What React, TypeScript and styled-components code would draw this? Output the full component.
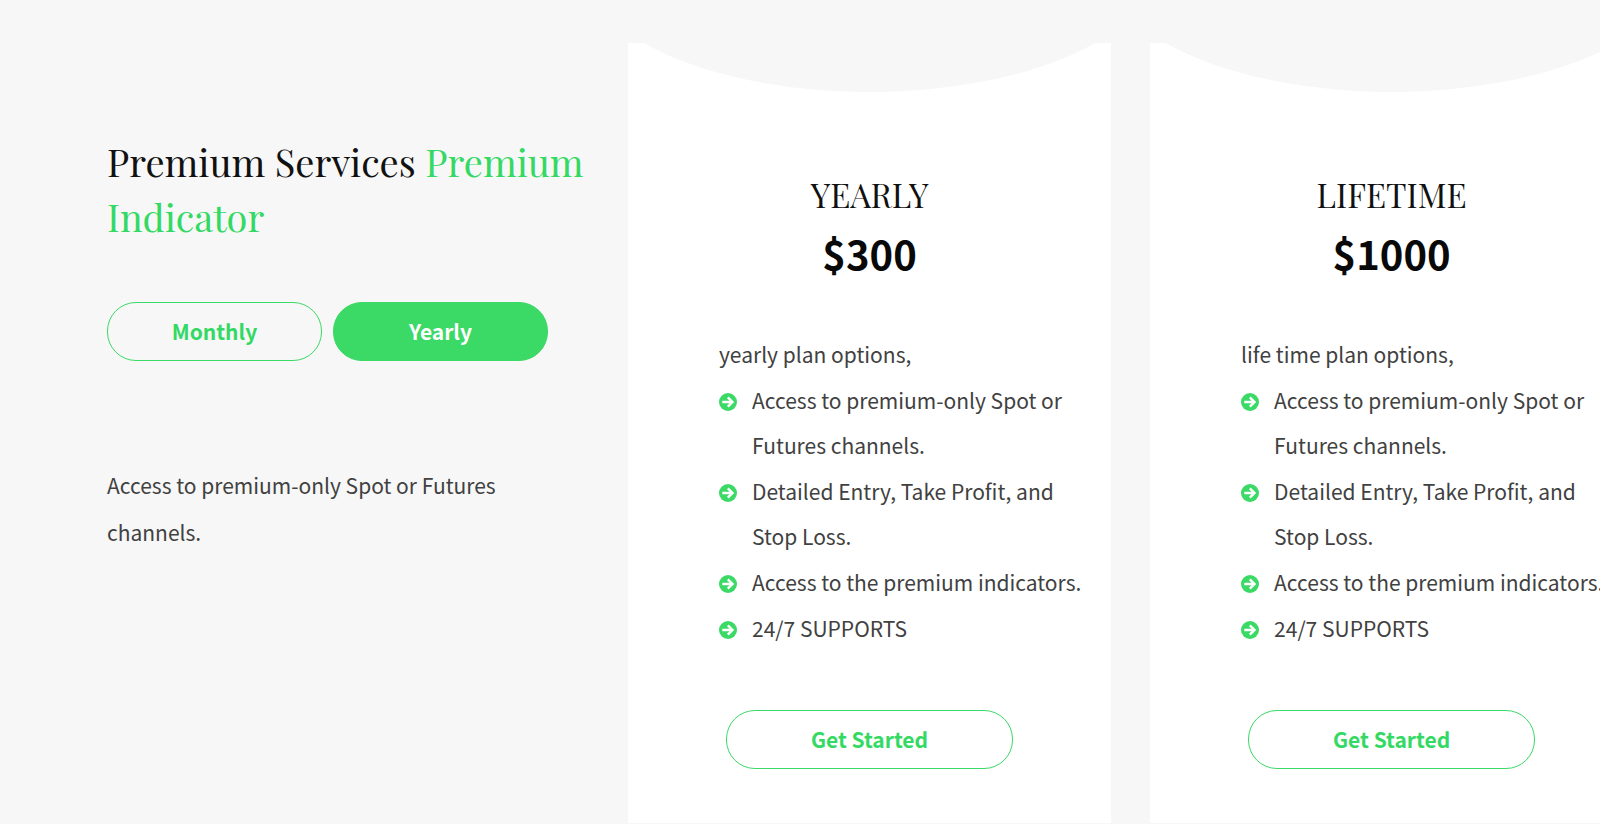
import React, { useState } from "react";
import styled, { createGlobalStyle } from "styled-components";

const colors = {
  page: "#f7f7f7",
  card: "#ffffff",
  green: "#3bd966",
  greenText: "#34d964",
  heading: "#111111",
  price: "#090909",
  body: "#414141",
};

const serif = `"Playfair Display", "Liberation Serif", serif`;
const sans = `"Noto Sans CJK SC", sans-serif`;

const GlobalStyle = createGlobalStyle`
  *, *::before, *::after { box-sizing: border-box; }
  body {
    margin: 0;
    background: ${colors.page};
    color: ${colors.body};
    font-family: ${sans};
    font-size: 21px;
  }
  h1, h2, p, ul { margin: 0; padding: 0; font-weight: 400; }
`;

const Section = styled.main`
  display: flex;
  padding-top: 43px;
  padding-bottom: 1px;
  overflow: hidden;
`;

const Intro = styled.section`
  flex: 0 0 39.25%;
  padding: 91px 40px 0 107px;
`;

const Heading = styled.h1`
  color: ${colors.heading};
  font-family: ${serif};
  font-size: 38px;
  line-height: 55px;
`;

const Accent = styled.span`
  color: ${colors.greenText};
`;

const Toggle = styled.div`
  display: flex;
  gap: 11px;
  margin-top: 58px;
`;

const PillButton = styled.button<{ $filled?: boolean; $width: number }>`
  width: ${(p) => p.$width}px;
  height: 59px;
  padding: 0 0 2px;
  border: 1px solid ${colors.green};
  border-radius: 29px;
  background: ${(p) => (p.$filled ? colors.green : "transparent")};
  color: ${(p) => (p.$filled ? "#ffffff" : colors.greenText)};
  font-family: ${sans};
  font-size: 21px;
  font-weight: 700;
  line-height: 32px;
  cursor: pointer;
`;

const Summary = styled.p`
  max-width: 440px;
  margin-top: 101px;
  line-height: 47px;
`;

const Plans = styled.section`
  display: flex;
  flex: 1;
  gap: 39px;
  min-width: 0;
`;

const Card = styled.article`
  position: relative;
  display: flex;
  flex: 0 0 49.7%;
  flex-direction: column;
  align-items: center;
  padding: 126px 24px 54px;
  overflow: hidden;
  background: ${colors.card};

  &::before {
    content: "";
    position: absolute;
    top: -213px;
    left: -10%;
    width: 120%;
    height: 262px;
    border-radius: 50%;
    background: ${colors.page};
  }
`;

const PlanName = styled.h2`
  color: ${colors.heading};
  font-family: ${serif};
  font-size: 33px;
  line-height: 50px;
`;

const Price = styled.p`
  color: ${colors.price};
  font-size: 40px;
  font-weight: 700;
  line-height: 68px;
`;

const Options = styled.div`
  display: flex;
  flex-direction: column;
  align-self: stretch;
  gap: 1px;
  margin: 45px 0 59px;
  padding-left: 67px;
  line-height: 45px;
`;

const Features = styled.ul`
  display: flex;
  flex-direction: column;
  gap: 1px;
  list-style: none;
`;

const Feature = styled.li`
  display: flex;
  gap: 15px;
`;

const BulletIcon = styled.svg`
  flex: none;
  width: 18px;
  height: 18px;
  margin-top: 15px;
`;

function Bullet() {
  return (
    <BulletIcon viewBox="0 0 18 18" aria-hidden="true">
      <circle cx="9" cy="9" r="9" fill={colors.green} />
      <path
        d="M3.3 9H13.4M8.8 4.3L13.5 9L8.8 13.7"
        fill="none"
        stroke="#ffffff"
        strokeWidth="2.4"
      />
    </BulletIcon>
  );
}

const features = [
  "Access to premium-only Spot or Futures channels.",
  "Detailed Entry, Take Profit, and Stop Loss.",
  "Access to the premium indicators.",
  "24/7 SUPPORTS",
];

const plans = [
  { name: "YEARLY", price: "$300", lead: "yearly plan options," },
  { name: "LIFETIME", price: "$1000", lead: "life time plan options," },
];

type Period = "Monthly" | "Yearly";
const periods: Period[] = ["Monthly", "Yearly"];

export default function App() {
  const [period, setPeriod] = useState<Period>("Yearly");

  return (
    <>
      <GlobalStyle />
      <Section>
        <Intro>
          <Heading>
            Premium Services <Accent>Premium Indicator</Accent>
          </Heading>
          <Toggle>
            {periods.map((p) => (
              <PillButton
                key={p}
                type="button"
                $width={215}
                $filled={p === period}
                aria-pressed={p === period}
                onClick={() => setPeriod(p)}
              >
                {p}
              </PillButton>
            ))}
          </Toggle>
          <Summary>{features[0]}</Summary>
        </Intro>
        <Plans>
          {plans.map((plan) => (
            <Card key={plan.name}>
              <PlanName>{plan.name}</PlanName>
              <Price>{plan.price}</Price>
              <Options>
                <p>{plan.lead}</p>
                <Features>
                  {features.map((feature) => (
                    <Feature key={feature}>
                      <Bullet />
                      <span>{feature}</span>
                    </Feature>
                  ))}
                </Features>
              </Options>
              <PillButton type="button" $width={287}>
                Get Started
              </PillButton>
            </Card>
          ))}
        </Plans>
      </Section>
    </>
  );
}
